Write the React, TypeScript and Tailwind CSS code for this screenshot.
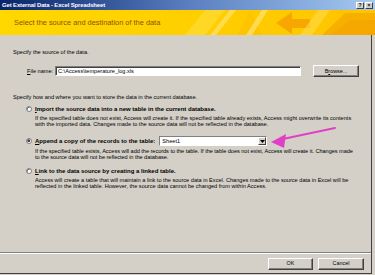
import React from 'react';

const FONT = { fontFamily: '"Liberation Sans", Arial, sans-serif' };

function Radio({ checked }: { checked?: boolean }) {
    return (
        <span className="w-[6px] h-[6px] rounded-full bg-white border border-[#808080] shadow-[inset_0.5px_0.5px_0_#404040] flex items-center justify-center shrink-0">
            {checked && <span className="w-[2px] h-[2px] rounded-full bg-black" />}
        </span>
    );
}

function Button({ children }: { children: React.ReactNode }) {
    return (
        <div className="h-[12px] bg-[#d4d0c8] border border-t-white border-l-white border-r-[#404040] border-b-[#404040] shadow-[inset_-1px_-1px_0_#808080] flex items-center justify-center text-[5.4px] text-black">
            {children}
        </div>
    );
}

function Banner() {
    return (
        <div className="h-[25px] relative bg-[#ffd400] flex items-center pl-[14px] overflow-hidden">
            <svg className="absolute inset-0" width="375" height="25" viewBox="0 0 375 25">
                <defs>
                    <linearGradient id="bg" x1="0" x2="1" y1="0" y2="0">
                        <stop offset="0" stopColor="#ffd800" />
                        <stop offset="0.45" stopColor="#ffd000" />
                        <stop offset="1" stopColor="#ffc400" />
                    </linearGradient>
                </defs>
                <rect width="375" height="25" fill="url(#bg)" />
                <polygon points="185,25 205,0 225,0 205,25" fill="#ffe24a" opacity="0.5" />
                <polygon points="210,25 230,0 236,0 216,25" fill="#ffe680" opacity="0.6" />
                <polygon points="238,25 250,0 262,25" fill="#ffc000" opacity="0.7" />
                <polygon points="246,25 262,0 268,0 252,25" fill="#fff0a0" opacity="0.5" />
                <polygon points="276,13 292,2 292,9 310,9 310,18 292,18 292,24" fill="#f5a000" opacity="0.8" />
                <polygon points="300,25 318,0 330,0 312,25" fill="#ffd84a" opacity="0.6" />
                <polygon points="322,25 345,3 375,3 375,25" fill="#f5a800" opacity="0.75" />
                <polygon points="330,25 350,10 375,10 375,25" fill="#f0a000" opacity="0.5" />
            </svg>
            <span className="relative text-[7.4px] text-[#8a5400]">Select the source and destination of the data</span>
        </div>
    );
}

export default function App() {
    return (
        <div style={FONT} className="w-[375px] h-[275px] bg-[#d4d0c8] relative overflow-hidden text-black">
            {/* title bar */}
            <div className="h-[10px] bg-gradient-to-r from-[#0a246a] via-[#5a7ebf] to-[#a6caf0] flex items-center justify-between pl-[2px] pr-[2px]">
                <span className="text-white font-bold text-[5.9px] tracking-[-0.1px]">Get External Data - Excel Spreadsheet</span>
                <div className="flex gap-[1px]">
                    <span className="w-[8px] h-[7px] bg-[#d4d0c8] border border-t-white border-l-white border-r-[#404040] border-b-[#404040] text-[5px] font-bold flex items-center justify-center leading-none">?</span>
                    <span className="w-[8px] h-[7px] bg-[#d4d0c8] border border-t-white border-l-white border-r-[#404040] border-b-[#404040] text-[5px] font-bold flex items-center justify-center leading-none">×</span>
                </div>
            </div>

            <Banner />

            <div className="h-[239px] w-[372px] border-r border-b border-[#404040] flex flex-col">
                <div className="flex-1 pl-[13px] pr-[10px] text-[5.6px] leading-[6px]">
                    <div className="mt-[14px]">Specify the source of the data.</div>

                    <div className="mt-[10px] flex items-center pl-[14px]">
                        <span className="w-[28px]"><u>F</u>ile name:</span>
                        <div className="w-[246px] h-[10px] bg-white border border-t-[#808080] border-l-[#808080] border-r-white border-b-white shadow-[inset_1px_1px_0_#404040] flex items-center pl-[2px]">
                            C:\Access\temperature_log.xls
                        </div>
                        <div className="ml-[12px] w-[46px]">
                            <Button>B<u>r</u>owse...</Button>
                        </div>
                    </div>

                    <div className="mt-[17px]">Specify how and where you want to store the data in the current database.</div>

                    <div className="mt-[6px] pl-[13px] flex items-start gap-[3px]">
                        <Radio />
                        <div>
                            <div className="font-bold text-[6px]"><u>I</u>mport the source data into a new table in the current database.</div>
                            <div className="mt-[3px] whitespace-nowrap">
                                If the specified table does not exist, Access will create it. If the specified table already exists, Access might overwrite its contents<br />
                                with the imported data. Changes made to the source data will not be reflected in the database.
                            </div>
                        </div>
                    </div>

                    <div className="mt-[9px] pl-[13px] flex items-start gap-[3px]">
                        <span className="mt-[2px]"><Radio checked /></span>
                        <div>
                            <div className="flex items-center gap-[4px]">
                                <span className="font-bold text-[6px]"><u>A</u>ppend a copy of the records to the table:</span>
                                <div className="w-[108px] h-[10px] bg-white border border-t-[#808080] border-l-[#808080] border-r-white border-b-white flex items-center justify-between pl-[2px]">
                                    <span>Sheet1</span>
                                    <span className="w-[8px] h-[8px] bg-[#d4d0c8] border border-t-white border-l-white border-r-[#404040] border-b-[#404040] flex items-center justify-center">
                                        <svg width="5" height="3" viewBox="0 0 5 3"><polygon points="0,0 5,0 2.5,3" fill="#000" /></svg>
                                    </span>
                                </div>
                            </div>
                            <div className="mt-[2px] whitespace-nowrap tracking-[-0.04px]">
                                If the specified table exists, Access will add the records to the table. If the table does not exist, Access will create it. Changes made<br />
                                to the source data will not be reflected in the database.
                            </div>
                        </div>
                    </div>

                    <div className="mt-[8px] pl-[13px] flex items-start gap-[3px]">
                        <Radio />
                        <div>
                            <div className="font-bold text-[6px]"><u>L</u>ink to the data source by creating a linked table.</div>
                            <div className="mt-[3px] whitespace-nowrap">
                                Access will create a table that will maintain a link to the source data in Excel. Changes made to the source data in Excel will be<br />
                                reflected in the linked table. However, the source data cannot be changed from within Access.
                            </div>
                        </div>
                    </div>
                </div>

                <div className="h-[2px] border-t border-[#808080] border-b border-b-white" />
                <div className="h-[19px] flex items-center justify-end gap-[5px] pr-[7px]">
                    <div className="w-[45px]"><Button>OK</Button></div>
                    <div className="w-[46px]"><Button>Cancel</Button></div>
                </div>
            </div>

            {/* pink annotation arrow */}
            <svg className="absolute left-0 top-0 pointer-events-none" width="375" height="275" viewBox="0 0 375 275">
                <line x1="335" y1="128" x2="278" y2="140" stroke="#e040c8" strokeWidth="2" strokeLinecap="round" />
                <polygon points="271,142 286,134 284,148" fill="#e040c8" />
            </svg>
        </div>
    );
}
